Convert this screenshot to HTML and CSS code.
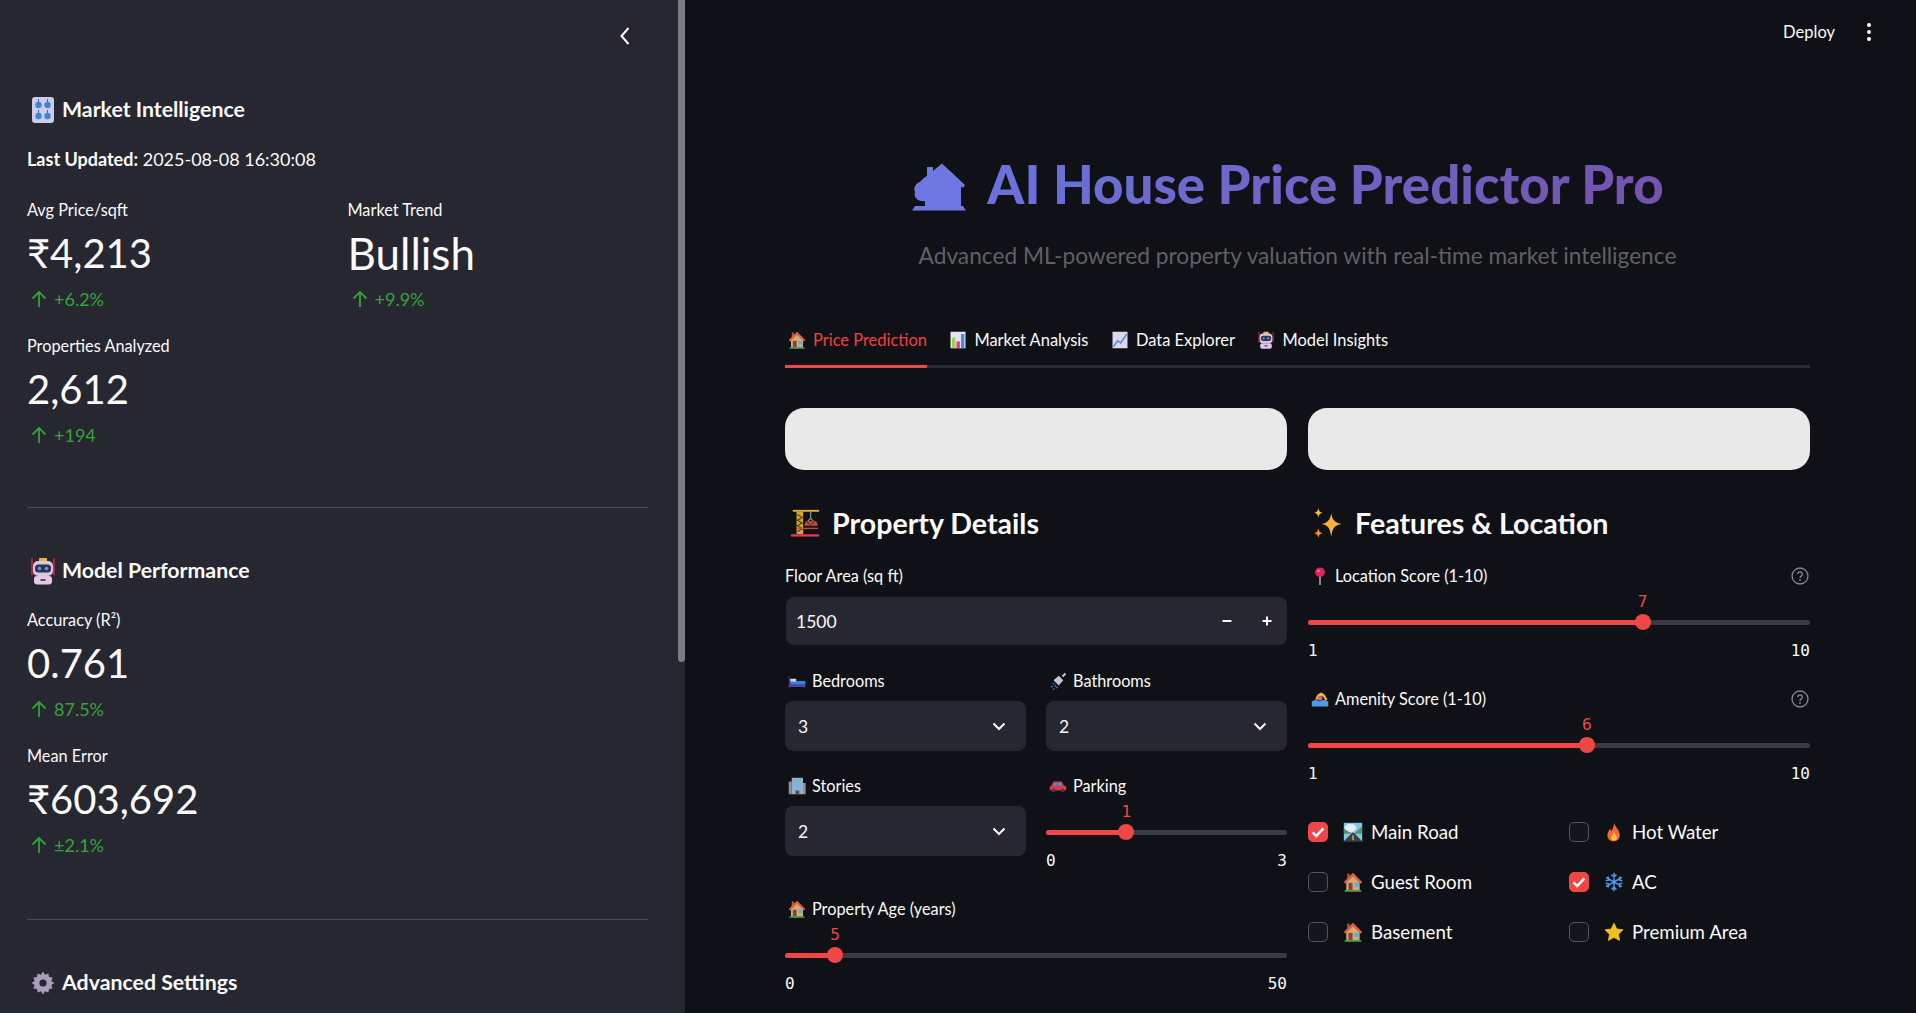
FILE: index.html
```html
<!DOCTYPE html>
<html lang="en">

<head>
  <meta charset="UTF-8">
  <title>AI House Price Predictor Pro</title>
  <link rel="stylesheet" href="styles.css">
</head>

<body>

  <!-- emoji drawn once, used everywhere below -->
  <svg class="sprite" xmlns="http://www.w3.org/2000/svg">
    <symbol id="e-knobs" viewBox="0 0 24 28">
      <rect x="1" y="1" width="22" height="26" rx="3" fill="#cfcbec"/>
      <circle cx="7.5" cy="9" r="3.2" fill="#3f86d8"/>
      <circle cx="16.5" cy="9" r="3.2" fill="#3f86d8"/>
      <circle cx="7.5" cy="20" r="3.2" fill="#3f86d8"/>
      <circle cx="16.5" cy="20" r="3.2" fill="#3f86d8"/>
      <path d="M7.5 3v3M16.5 3v3M7.5 14v3M16.5 14v3" stroke="#5a5f8a" stroke-width="1"/>
    </symbol>
    <symbol id="e-robot" viewBox="0 0 24 28">
      <path d="M1 1v17M23 1v17" stroke="#e0245e" stroke-width="1.4"/>
      <rect x="8" y="1" width="8" height="4" rx="1" fill="#f2b33d"/>
      <rect x="2" y="4" width="20" height="15" rx="5" fill="#d9c7dc"/>
      <rect x="4" y="7.500" width="16" height="8" rx="3.500" fill="#2b3350"/>
      <circle cx="8.500" cy="11.500" r="1.800" fill="#4f9df0"/>
      <circle cx="15.500" cy="11.500" r="1.800" fill="#4f9df0"/>
      <rect x="3" y="19" width="18" height="8.500" rx="3" fill="#e3c6ea"/>
      <rect x="9.500" y="22" width="5" height="2" fill="#5b4a66"/>
    </symbol>
    <symbol id="e-gear" viewBox="0 0 24 24">
      <path d="M12 1.500l2 3.200 3.400-1.300.6 3.600 3.600.6-1.300 3.400 3.200 2-3.200 2 1.300 3.400-3.600.6-.6 3.600-3.400-1.300-2 3.200-2-3.200-3.400 1.300-.6-3.600-3.600-.6 1.300-3.400-3.200-2 3.200-2-1.300-3.400 3.600-.6.6-3.600 3.400 1.300z" fill="#a99db8" transform="translate(0 -1)"/>
      <circle cx="12" cy="12" r="3.600" fill="#262730"/>
    </symbol>
    <symbol id="e-house" viewBox="0 0 24 24">
      <rect x="5" y="2" width="3" height="6" fill="#a5583a"/>
      <path d="M4 12l8-7.500 8 7.500v10H4z" fill="#d8a878"/>
      <path d="M12 1l11 11-2 2-9-9-9 9-2-2z" fill="#e2603c"/>
      <rect x="6.500" y="13" width="5" height="9" fill="#7a4a38"/>
      <rect x="14" y="13" width="5" height="5" fill="#4db2ef"/>
      <rect x="2" y="22" width="20" height="1.500" fill="#5fcb62"/>
    </symbol>
    <symbol id="e-bars" viewBox="0 0 24 24">
      <rect x="2" y="1" width="20" height="22" fill="#e6e4f2"/>
      <rect x="4" y="9" width="4.500" height="14" fill="#8ed84b"/>
      <rect x="10" y="14" width="4.500" height="9" fill="#e8397a"/>
      <rect x="16" y="4" width="4.500" height="19" fill="#3d8fe0"/>
    </symbol>
    <symbol id="e-line" viewBox="0 0 24 24">
      <rect x="2" y="1" width="20" height="22" fill="#dcd8ec"/>
      <path d="M3 21l6-8 4 3 8-12" fill="none" stroke="#4a90e2" stroke-width="2"/>
    </symbol>
    <symbol id="e-crane" viewBox="0 0 32 32">
      <rect x="7" y="4" width="7" height="24" fill="#d9a22f"/>
      <path d="M8 7l5 3-5 3 5 3-5 3 5 3-5 3" fill="none" stroke="#4a3a1a" stroke-width="1.200"/>
      <rect x="3" y="2" width="28" height="2" fill="#e3b03a"/>
      <path d="M22 4v7M19 14l3-3 3 3" fill="none" stroke="#8b8f9c" stroke-width="1.300"/>
      <path d="M17 14h11l2 5H15z" fill="#c84a3a"/>
      <path d="M18 15l4 3 4-3" fill="none" stroke="#3d2a2a" stroke-width="1"/>
      <rect x="8" y="21" width="22" height="1.500" fill="#c84a3a"/>
      <rect x="1" y="28" width="30" height="2.500" fill="#e8325f"/>
    </symbol>
    <symbol id="e-sparkles" viewBox="2 1 28 28">
      <path d="M19 6c1 6 3 9 10 10-7 1-9 4-10 12-1-8-3-11-9-12 6-1 8-4 9-10z" fill="#f9b233"/>
      <path d="M7 1c.5 3 1.500 4 4 4.500-2.500.5-3.500 1.500-4 4.500-.5-3-1.500-4-4-4.500 2.500-.5 3.500-1.500 4-4.500z" fill="#f4c04d"/>
      <path d="M7 20c.5 3 1.500 4 4 4.500-2.500.5-3.500 1.500-4 4.500-.5-3-1.500-4-4-4.500 2.500-.5 3.500-1.500 4-4.500z" fill="#f28a2e"/>
    </symbol>
    <symbol id="e-bed" viewBox="0 0 24 24">
      <rect x="1" y="6" width="2" height="15" fill="#3a2f88"/>
      <rect x="21" y="12" width="2" height="9" fill="#3a2f88"/>
      <rect x="3" y="12" width="20" height="5" fill="#3d7fe0"/>
      <rect x="3" y="9" width="8" height="3.500" rx="1" fill="#cfd8ee"/>
      <rect x="1" y="17" width="22" height="3" fill="#5a3fa8"/>
    </symbol>
    <symbol id="e-shower" viewBox="0 0 24 24">
      <path d="M18 6l4-4" stroke="#c9cbd2" stroke-width="2.500"/>
      <path d="M6 11l7-6 6 6-6 7z" fill="#c3c6ce"/>
      <path d="M7 15l-1.500 1.500M9.500 17.500l-2 2M5 18.500l-2 2M11 20l-1.500 1.500M7 22l-1.500 1.500" stroke="#3d82f0" stroke-width="1.800"/>
    </symbol>
    <symbol id="e-building" viewBox="0 0 24 24">
      <rect x="5" y="1" width="15" height="22" fill="#a4acb8"/>
      <rect x="1" y="6" width="4" height="17" fill="#8b93a0"/>
      <rect x="20" y="8" width="3.500" height="15" fill="#8b93a0"/>
      <path d="M7 3.500h11M7 6.500h11M7 9.500h11M7 12.500h11M7 15.500h11" stroke="#58bdf0" stroke-width="1.600" stroke-dasharray="2 1"/>
      <rect x="10" y="18" width="5" height="5" fill="#4a4f5a"/>
    </symbol>
    <symbol id="e-car" viewBox="0 0 24 24">
      <path d="M6 6h11l3 6H3z" fill="#d63a4a"/>
      <path d="M7.500 7.500h3.500v4H5.500zM12.500 7.500h3.500l2 4h-5.500z" fill="#4a8fdc"/>
      <rect x="1" y="11.500" width="22" height="6.500" rx="2" fill="#d63a4a"/>
      <circle cx="6" cy="18" r="2.500" fill="#3a3a44"/>
      <circle cx="18" cy="18" r="2.500" fill="#3a3a44"/>
    </symbol>
    <symbol id="e-pin" viewBox="0 0 24 24">
      <rect x="11" y="10" width="2" height="14" fill="#aeb3bc"/>
      <circle cx="12" cy="7" r="6.500" fill="#e0245e"/>
      <circle cx="10" cy="5" r="1.500" fill="#f78fb0"/>
    </symbol>
    <symbol id="e-swim" viewBox="0 0 24 24">
      <path d="M6 13C7 6 12 3 15 4c3 1 5 5 7 9l-3 1c-2-4-3-6-5-6-2 0-4 2-5 5z" fill="#f5b82e"/>
      <circle cx="12" cy="11" r="3.200" fill="#e0608a"/>
      <path d="M1 15l5-2 5 2 6-2 6 2v7H1z" fill="#4a9aea"/>
    </symbol>
    <symbol id="e-road" viewBox="0 0 24 24">
      <rect x="1" y="1" width="22" height="22" fill="#7ccbe8"/>
      <ellipse cx="9" cy="7" rx="7" ry="5" fill="#e8eef0"/>
      <path d="M1 8l10 6H1zM23 5L13 14h10z" fill="#5f8f6a"/>
      <path d="M1 23l10-10h2l10 10z" fill="#3c3f4a"/>
      <path d="M12 16v6" stroke="#f2c230" stroke-width="1.500"/>
    </symbol>
    <symbol id="e-fire" viewBox="3 0 18 24">
      <path d="M12 1c1 5 7 8 7 15a7.500 7.500 0 0 1-15 0c0-4 2-5 3-8 1 1 1.500 2 2 3 1.500-3 3-6 3-10z" fill="#f2692e"/>
      <path d="M12 12c.5 2.500 3.500 3.500 3.500 6.500a3.500 3.500 0 0 1-7 0c0-2.500 3-3.500 3.500-6.500z" fill="#fac03a"/>
    </symbol>
    <symbol id="e-snow" viewBox="0 0 24 24">
      <path d="M12 1v22M2.500 6.500l19 11M2.500 17.500l19-11M9 3l3 3 3-3M9 21l3-3 3 3M2 10.500l4-1-1-4M22 13.500l-4 1 1 4M2 13.500l4 1-1 4M22 10.500l-4-1 1-4" fill="none" stroke="#4a9ff0" stroke-width="1.700"/>
    </symbol>
    <symbol id="e-star" viewBox="0 0 24 24">
      <path d="M12 1.500l3.300 6.900 7.500 1-5.500 5.200 1.400 7.500-6.700-3.700-6.700 3.700 1.400-7.500L1.200 9.400l7.500-1z" fill="#f0c11e" stroke="#f0c11e" stroke-linejoin="round"/>
    </symbol>
    <symbol id="i-up" viewBox="0 0 16 18">
      <path d="M8 17V2M1.500 8.500L8 2l6.500 6.500" fill="none" stroke="currentColor" stroke-width="1.800"/>
    </symbol>
    <symbol id="i-chevron" viewBox="0 0 16 16">
      <path d="M2.500 5.500L8 11l5.500-5.500" fill="none" stroke="currentColor" stroke-width="2"/>
    </symbol>
    <symbol id="i-help" viewBox="0 0 18 18">
      <circle cx="9" cy="9" r="8" fill="none" stroke="currentColor" stroke-width="1.300"/>
      <path d="M6.700 7.100a2.300 2.300 0 1 1 3.500 2c-.8.500-1.200.9-1.200 1.800" fill="none" stroke="currentColor" stroke-width="1.300"/>
      <circle cx="9" cy="13" r=".9" fill="currentColor"/>
    </symbol>
    <symbol id="i-check" viewBox="0 0 20 20">
      <path d="M4 10.500l4 4 8-8.500" fill="none" stroke="#fff" stroke-width="2.800"/>
    </symbol>
  </svg>

  <div class="app">

    <aside class="sidebar">
      <div class="scrollbar"></div>
      <div class="side-top">
        <svg class="collapse" viewBox="0 0 12 20"><path d="M9.500 2L2.500 10l7 8" fill="none" stroke="currentColor" stroke-width="2"/></svg>
      </div>

      <h3 class="side-title first"><svg class="side-emo"><use href="#e-knobs"/></svg>Market Intelligence</h3>
      <p class="updated"><strong>Last Updated:</strong> 2025-08-08 16:30:08</p>

      <div class="metrics two">
        <div class="metric">
          <div class="metric-label">Avg Price/sqft</div>
          <div class="metric-value">₹4,213</div>
          <div class="metric-delta"><svg class="up"><use href="#i-up"/></svg>+6.2%</div>
        </div>
        <div class="metric">
          <div class="metric-label">Market Trend</div>
          <div class="metric-value wordy">Bullish</div>
          <div class="metric-delta"><svg class="up"><use href="#i-up"/></svg>+9.9%</div>
        </div>
        <div class="metric">
          <div class="metric-label">Properties Analyzed</div>
          <div class="metric-value">2,612</div>
          <div class="metric-delta"><svg class="up"><use href="#i-up"/></svg>+194</div>
        </div>
      </div>

      <hr class="rule first-rule">

      <h3 class="side-title"><svg class="side-emo"><use href="#e-robot"/></svg>Model Performance</h3>

      <div class="metrics">
        <div class="metric">
          <div class="metric-label">Accuracy (R²)</div>
          <div class="metric-value">0.761</div>
          <div class="metric-delta"><svg class="up"><use href="#i-up"/></svg>87.5%</div>
        </div>
        <div class="metric">
          <div class="metric-label">Mean Error</div>
          <div class="metric-value">₹603,692</div>
          <div class="metric-delta"><svg class="up"><use href="#i-up"/></svg>±2.1%</div>
        </div>
      </div>

      <hr class="rule second-rule">

      <h3 class="side-title"><svg class="side-emo"><use href="#e-gear"/></svg>Advanced Settings</h3>
    </aside>

    <main class="main">
      <div class="topbar">
        <span class="deploy">Deploy</span>
        <span class="kebab"><i></i><i></i><i></i></span>
      </div>

      <h1 class="hero-title">
        <svg class="hero-house" viewBox="10 8 56 49">
          <path d="M26 21V12h6v4l9-7.500L64 30l-2 3-2-1.500V51h2l3 4.500H11L14 51h10v-5c-6 1-12-3-10-9-2-4 1-9 5-10 2-3 5-5 7-6z" fill="#6f78e2"/>
        </svg>
        <span>AI House Price Predictor Pro</span>
      </h1>
      <p class="hero-sub">Advanced ML-powered property valuation with real-time market intelligence</p>

      <div class="tabs">
        <div class="tab active"><svg class="tab-emo"><use href="#e-house"/></svg>Price Prediction</div>
        <div class="tab"><svg class="tab-emo"><use href="#e-bars"/></svg>Market Analysis</div>
        <div class="tab"><svg class="tab-emo"><use href="#e-line"/></svg>Data Explorer</div>
        <div class="tab"><svg class="tab-emo"><use href="#e-robot"/></svg>Model Insights</div>
      </div>

      <div class="columns blanks">
        <div class="blank"></div>
        <div class="blank"></div>
      </div>

      <div class="columns form">
        <section>
          <h2 class="form-title"><svg class="title-emo"><use href="#e-crane"/></svg>Property Details</h2>

          <div class="label">Floor Area (sq ft)</div>
          <div class="number-input">
            <span>1500</span>
            <span class="steppers">
              <svg viewBox="0 0 12 12"><path d="M1.500 6h9" stroke="currentColor" stroke-width="2"/></svg>
              <svg viewBox="0 0 12 12"><path d="M1.500 6h9M6 1.500v9" stroke="currentColor" stroke-width="2"/></svg>
            </span>
          </div>

          <div class="inner-cols">
            <div>
              <div class="label"><svg class="label-emo"><use href="#e-bed"/></svg>Bedrooms</div>
              <div class="select"><span>3</span><svg class="chevron"><use href="#i-chevron"/></svg></div>
            </div>
            <div>
              <div class="label"><svg class="label-emo"><use href="#e-shower"/></svg>Bathrooms</div>
              <div class="select"><span>2</span><svg class="chevron"><use href="#i-chevron"/></svg></div>
            </div>
            <div>
              <div class="label"><svg class="label-emo"><use href="#e-building"/></svg>Stories</div>
              <div class="select"><span>2</span><svg class="chevron"><use href="#i-chevron"/></svg></div>
            </div>
            <div>
              <div class="label"><svg class="label-emo"><use href="#e-car"/></svg>Parking</div>
              <div class="slider">
                <div class="slider-value"><span style="left: 33.33%">1</span></div>
                <div class="slider-track"><div class="slider-fill" style="width: 33.33%"></div><div class="slider-thumb" style="left: 33.33%"></div></div>
                <div class="slider-range"><span>0</span><span>3</span></div>
              </div>
            </div>
          </div>

          <div class="label slider-label"><svg class="label-emo"><use href="#e-house"/></svg>Property Age (years)</div>
          <div class="slider">
            <div class="slider-value"><span style="left: 10%">5</span></div>
            <div class="slider-track"><div class="slider-fill" style="width: 10%"></div><div class="slider-thumb" style="left: 10%"></div></div>
            <div class="slider-range"><span>0</span><span>50</span></div>
          </div>
        </section>

        <section>
          <h2 class="form-title"><svg class="title-emo"><use href="#e-sparkles"/></svg>Features &amp; Location</h2>

          <div class="label help-row">
            <span class="help-text"><svg class="label-emo"><use href="#e-pin"/></svg>Location Score (1-10)</span>
            <svg class="help"><use href="#i-help"/></svg>
          </div>
          <div class="slider">
            <div class="slider-value"><span style="left: 66.67%">7</span></div>
            <div class="slider-track"><div class="slider-fill" style="width: 66.67%"></div><div class="slider-thumb" style="left: 66.67%"></div></div>
            <div class="slider-range"><span>1</span><span>10</span></div>
          </div>

          <div class="label help-row slider-label">
            <span class="help-text"><svg class="label-emo"><use href="#e-swim"/></svg>Amenity Score (1-10)</span>
            <svg class="help"><use href="#i-help"/></svg>
          </div>
          <div class="slider">
            <div class="slider-value"><span style="left: 55.56%">6</span></div>
            <div class="slider-track"><div class="slider-fill" style="width: 55.56%"></div><div class="slider-thumb" style="left: 55.56%"></div></div>
            <div class="slider-range"><span>1</span><span>10</span></div>
          </div>

          <div class="checks">
            <div class="check"><span class="box on"><svg><use href="#i-check"/></svg></span><svg class="check-emo"><use href="#e-road"/></svg>Main Road</div>
            <div class="check"><span class="box"></span><svg class="check-emo"><use href="#e-fire"/></svg>Hot Water</div>
            <div class="check"><span class="box"></span><svg class="check-emo"><use href="#e-house"/></svg>Guest Room</div>
            <div class="check"><span class="box on"><svg><use href="#i-check"/></svg></span><svg class="check-emo"><use href="#e-snow"/></svg>AC</div>
            <div class="check"><span class="box"></span><svg class="check-emo"><use href="#e-house"/></svg>Basement</div>
            <div class="check"><span class="box"></span><svg class="check-emo"><use href="#e-star"/></svg>Premium Area</div>
          </div>
        </section>
      </div>
    </main>

  </div>

</body>

</html>
```

FILE: styles.css
```css
* {
  box-sizing: border-box;
}

html,
body {
  height: 100%;
  margin: 0;
  overflow: hidden;
}

body {
  font-family: Lato, "Noto Sans", sans-serif;
  font-size: 16px;
  color: #fafafa;
  background: #0f1116;
}

.sprite {
  display: none;
}

.app {
  display: flex;
  height: 1013px;
  overflow: hidden;
}

/* sidebar */

.sidebar {
  position: relative;
  flex: 0 0 685px;
  padding: 0 37px 0 27px;
  background: #262730;
  overflow: hidden;
}

.scrollbar {
  position: absolute;
  top: 0;
  right: 0;
  width: 7px;
  height: 662px;
  border-radius: 0 0 4px 4px;
  background: #7b7b82;
}

.side-top {
  display: flex;
  justify-content: flex-end;
  align-items: center;
  height: 72px;
  padding-right: 17px;
}

.collapse {
  width: 12px;
  height: 20px;
}

.side-title {
  display: flex;
  align-items: center;
  height: 28px;
  margin: 49px 0 0;
  padding-bottom: 2px;
  font-size: 21.3px;
  font-weight: 700;
  line-height: 26px;
}

.side-title.first {
  margin-top: 24px;
}

.side-emo {
  width: 24px;
  height: 28px;
  margin: 2px 7px 0 4px;
  flex: none;
}

.updated {
  margin: 24px 0 0;
  font-size: 18px;
  line-height: 22px;
}

.metrics {
  display: grid;
  row-gap: 27px;
  margin-top: 25px;
}

.metrics.two {
  grid-template-columns: 1fr 1fr;
  column-gap: 20px;
  margin-top: 30px;
}

.metric-label {
  font-size: 16.3px;
  line-height: 20px;
}

.metric-value {
  margin-top: 3px;
  font-size: 40px;
  line-height: 60px;
}

.metric-value.wordy {
  font-size: 44px;
}

.metric-delta {
  display: flex;
  align-items: center;
  margin-top: 6px;
  font-size: 18px;
  line-height: 20px;
  color: #35a33a;
}

.up {
  width: 16px;
  height: 18px;
  margin: 0 7px 0 4px;
}

.rule {
  height: 1px;
  margin: 0;
  border: 0;
  background: #4a4b55;
}

.first-rule {
  margin-top: 62px;
}

.second-rule {
  margin-top: 64px;
}

/* main area */

.main {
  flex: 1;
  min-width: 0;
  padding: 0 106px 0 100px;
}

.topbar {
  display: flex;
  justify-content: flex-end;
  align-items: center;
  gap: 32px;
  height: 64px;
  margin-right: -74px;
  padding-right: 13px;
}

.deploy {
  font-size: 16.5px;
}

.kebab {
  display: flex;
  flex-direction: column;
  gap: 3px;
}

.kebab i {
  display: block;
  width: 4px;
  height: 4px;
  border-radius: 50%;
  background: #fafafa;
}

.hero-title {
  display: flex;
  justify-content: center;
  align-items: center;
  gap: 20px;
  height: 70px;
  margin: 85px 0 0;
  padding-right: 20px;
  font-size: 52.8px;
  font-weight: 900;
  line-height: 68px;
  background: linear-gradient(135deg, #667eea, #764ba2);
  -webkit-background-clip: text;
  background-clip: text;
  color: transparent;
}

.hero-house {
  width: 56px;
  height: 49px;
  margin-top: 6px;
}

.hero-sub {
  margin: 22px 0 0;
  font-size: 22.7px;
  line-height: 30px;
  text-align: center;
  color: #5f6163;
}

.tabs {
  display: flex;
  gap: 19.5px;
  height: 54px;
  margin-top: 43px;
  border-bottom: 3px solid #2a2b33;
}

.tab {
  display: flex;
  align-items: center;
  height: 54px;
  border-bottom: 3px solid transparent;
  font-size: 16.45px;
}

.tab.active {
  color: #f23f3f;
  border-bottom-color: #f04646;
}

.tab-emo {
  width: 18px;
  height: 18px;
  margin: 0 7px 0 3px;
}

.columns {
  display: grid;
  grid-template-columns: 1fr 1fr;
  column-gap: 21px;
}

.blanks {
  margin-top: 40px;
}

.blank {
  height: 62px;
  border-radius: 19px;
  background: #e8e9e8;
}

.form {
  margin-top: 34px;
}

.form-title {
  display: flex;
  align-items: center;
  height: 40px;
  margin: 0 0 22px;
  padding-bottom: 2px;
  font-size: 28.6px;
  font-weight: 700;
  line-height: 38px;
}

.title-emo {
  width: 30px;
  height: 30px;
  margin: 0 12px 0 5px;
}

.label {
  display: flex;
  align-items: center;
  height: 20px;
  font-size: 16.3px;
  line-height: 20px;
}

.label-emo {
  width: 18px;
  height: 18px;
  margin: 0 6px 0 3px;
  flex: none;
}

.slider-label {
  margin-top: 28px;
}

.help-row {
  justify-content: space-between;
}

.help-text {
  display: flex;
  align-items: center;
}

.help {
  width: 18px;
  height: 18px;
  margin-right: 1px;
  color: #8a8b91;
}

.number-input {
  display: flex;
  justify-content: space-between;
  align-items: center;
  height: 48px;
  margin: 11px 0 0 1px;
  padding-left: 10px;
  border-radius: 8px;
  background: #262730;
  font-size: 17.5px;
}

.steppers {
  display: flex;
  gap: 28px;
  padding-right: 14px;
}

.steppers svg {
  width: 12px;
  height: 12px;
}

.inner-cols {
  display: grid;
  grid-template-columns: 1fr 1fr;
  column-gap: 20px;
  row-gap: 25px;
  margin-top: 26px;
}

.select {
  display: flex;
  justify-content: space-between;
  align-items: center;
  height: 50px;
  margin-top: 10px;
  padding: 0 19px 0 13px;
  border-radius: 8px;
  background: #262730;
  font-size: 17.5px;
}

.chevron {
  width: 16px;
  height: 16px;
}

/* sliders */

.slider {
  margin-top: 6px;
}

.slider-value {
  position: relative;
  height: 20px;
  font-family: "DejaVu Sans Mono", "Liberation Mono", monospace;
  font-size: 16px;
  line-height: 20px;
  color: #f04646;
}

.slider-value span {
  position: absolute;
  transform: translateX(-50%);
}

.slider-track {
  position: relative;
  height: 5px;
  margin-top: 8px;
  border-radius: 3px;
  background: #3a3b45;
}

.slider-fill {
  height: 100%;
  border-radius: 3px;
  background: #f04646;
}

.slider-thumb {
  position: absolute;
  top: -6px;
  width: 16px;
  height: 16px;
  margin-left: -8px;
  border-radius: 50%;
  background: #f04646;
}

.slider-range {
  display: flex;
  justify-content: space-between;
  height: 20px;
  margin-top: 16px;
  font-family: "DejaVu Sans Mono", "Liberation Mono", monospace;
  font-size: 16px;
  line-height: 20px;
}

/* checkboxes */

.checks {
  display: grid;
  grid-template-columns: 1fr 1fr;
  column-gap: 20px;
  row-gap: 20px;
  margin-top: 33px;
}

.check {
  display: flex;
  align-items: center;
  height: 30px;
  font-size: 18.7px;
}

.box {
  flex: none;
  width: 20px;
  height: 20px;
  margin-right: 15px;
  border: 1px solid #55565f;
  border-radius: 5px;
  background: #14161d;
}

.box.on {
  border-color: #f04646;
  background: #f04646;
}

.box svg {
  display: block;
  width: 18px;
  height: 18px;
}

.check-emo {
  flex: none;
  width: 20px;
  height: 20px;
  margin-right: 8px;
}
```
